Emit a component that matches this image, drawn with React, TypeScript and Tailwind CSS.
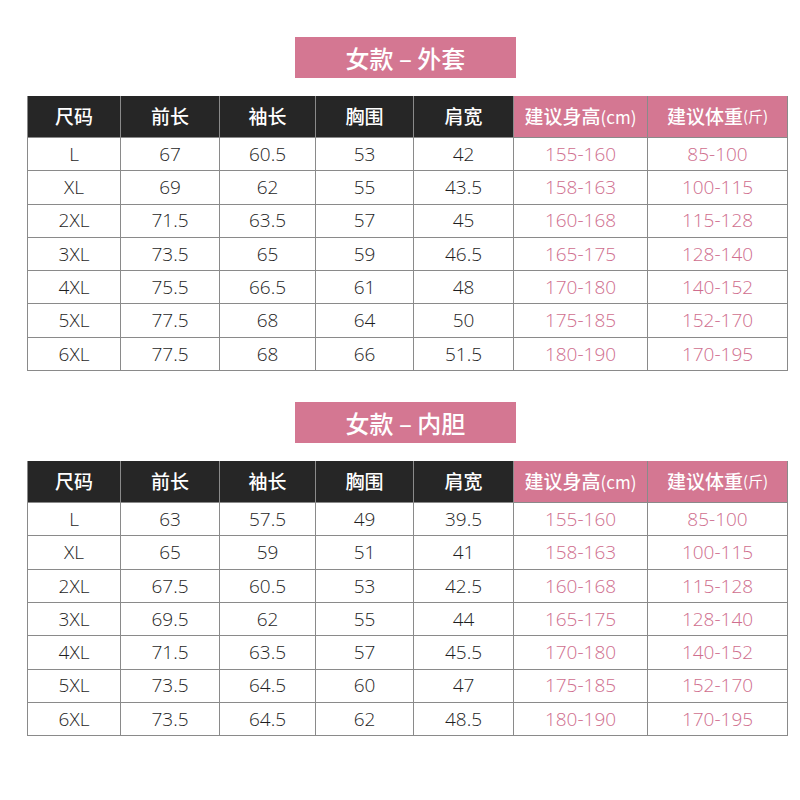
import React from 'react';

const cols = ['w-[93px]', 'w-[99px]', 'w-[96px]', 'w-[98px]', 'w-[100px]', 'w-[134px]', 'w-[140px]'];

const outer = [
  ['L', '67', '60.5', '53', '42', '155-160', '85-100'],
  ['XL', '69', '62', '55', '43.5', '158-163', '100-115'],
  ['2XL', '71.5', '63.5', '57', '45', '160-168', '115-128'],
  ['3XL', '73.5', '65', '59', '46.5', '165-175', '128-140'],
  ['4XL', '75.5', '66.5', '61', '48', '170-180', '140-152'],
  ['5XL', '77.5', '68', '64', '50', '175-185', '152-170'],
  ['6XL', '77.5', '68', '66', '51.5', '180-190', '170-195'],
];

const inner = [
  ['L', '63', '57.5', '49', '39.5', '155-160', '85-100'],
  ['XL', '65', '59', '51', '41', '158-163', '100-115'],
  ['2XL', '67.5', '60.5', '53', '42.5', '160-168', '115-128'],
  ['3XL', '69.5', '62', '55', '44', '165-175', '128-140'],
  ['4XL', '71.5', '63.5', '57', '45.5', '170-180', '140-152'],
  ['5XL', '73.5', '64.5', '60', '47', '175-185', '152-170'],
  ['6XL', '73.5', '64.5', '62', '48.5', '180-190', '170-195'],
];

const cjk = "font-['Noto_Sans_CJK_SC',sans-serif]";
const num = "font-['Open_Sans','Noto_Sans_CJK_SC',sans-serif]";

function SizeTable({ title, rows }: { title: string; rows: string[][] }) {
  return (
    <section className="flex flex-col">
      {/* Title banner */}
      <div className="flex pl-[295px]">
        <div className={`w-[221px] h-[41px] bg-[#d47792] text-white text-[24px] font-medium flex items-center justify-center whitespace-pre ${cjk}`}>
          {title}
        </div>
      </div>

      {/* Table */}
      <div className="ml-[27px] mt-[18px] w-[761px] border-l border-[#8a8a8a]">
        <div className={`flex h-[42px] ${cjk} text-[19px] font-medium text-white`}>
          {['尺码', '前长', '袖长', '胸围', '肩宽'].map((h, i) => (
            <div key={h} className={`${cols[i]} bg-[#262626] border-r border-b border-[#8a8a8a] flex items-center justify-center`}>
              {h}
            </div>
          ))}
          <div className={`${cols[5]} bg-[#d47792] border-r border-b border-[#8a8a8a] flex items-center justify-center`}>
            建议身高<span className="text-[17px] font-normal">(cm)</span>
          </div>
          <div className={`${cols[6]} bg-[#d47792] border-r border-b border-[#8a8a8a] flex items-center justify-center`}>
            建议体重<span className="text-[15px] font-normal">(斤)</span>
          </div>
        </div>
        {rows.map((r) => (
          <div key={r[0]} className={`flex h-[33.3px] ${num} text-[19px] font-light`}>
            {r.map((c, i) => (
              <div
                key={i}
                className={`${cols[i]} border-r border-b border-[#8a8a8a] flex items-center justify-center ${i >= 5 ? 'text-[#cf6e8e]' : 'text-[#1e1e1e]'}`}
              >
                {c}
              </div>
            ))}
          </div>
        ))}
      </div>
    </section>
  );
}

export default function App() {
  return (
    <div className="w-[800px] h-[800px] bg-white flex flex-col pt-[37px] gap-[31px]">
      <SizeTable title="女款 – 外套" rows={outer} />
      <SizeTable title="女款 – 内胆" rows={inner} />
    </div>
  );
}
